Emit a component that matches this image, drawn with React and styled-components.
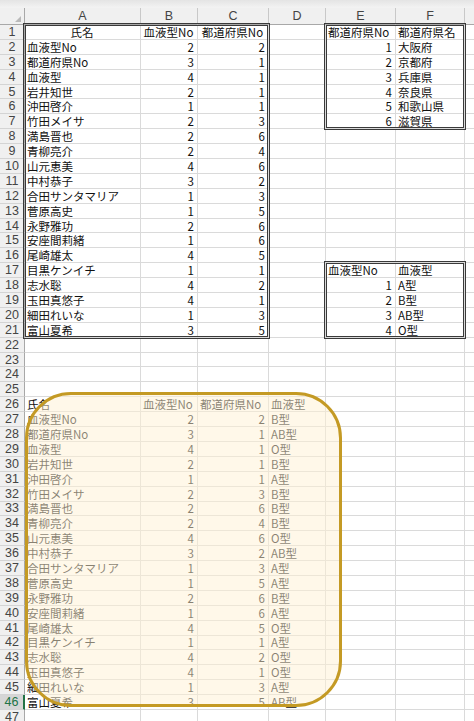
import React from 'react'
import styled, { createGlobalStyle, css } from 'styled-components'

const GlobalStyle = createGlobalStyle`
  html, body { margin: 0; padding: 0; background: #fff; }
  body { font-family: "Noto Sans CJK JP", "Noto Sans", sans-serif; overflow: hidden; }
`

const COLS = ['A', 'B', 'C', 'D', 'E', 'F', 'G']

const names = ['血液型No', '都道府県No', '血液型', '岩井知世', '沖田啓介', '竹田メイサ', '満島晋也', '青柳亮介', '山元恵美', '中村恭子', '合田サンタマリア', '菅原高史', '永野雅功', '安座間莉緒', '尾崎雄太', '目黒ケンイチ', '志水聡', '玉田真悠子', '細田れいな', '富山夏希']
const blood = [2, 3, 4, 2, 1, 2, 2, 2, 4, 3, 1, 1, 2, 1, 4, 1, 4, 4, 1, 3]
const pref = [2, 1, 1, 1, 1, 3, 6, 4, 6, 2, 3, 5, 6, 6, 5, 1, 2, 1, 3, 5]
const bloodTypes = ['A型', 'B型', 'AB型', 'O型']
const prefs = ['大阪府', '京都府', '兵庫県', '奈良県', '和歌山県', '滋賀県']

const Page = styled.div`
  position: relative;
  width: 474px;
  height: 721px;
  overflow: hidden;
  background: #fff;
`
const TopStrip = styled.div`
  height: 8px;
  background: linear-gradient(#e4e4e4, #f3f3f3);
`
const Sheet = styled.div`
  display: grid;
  grid-template-columns: 25px 116px 57px 71px 57px 70px 69px 64px;
  grid-template-rows: 17px;
  grid-auto-rows: 14.9px;
`
const ColHead = styled.div`
  box-sizing: border-box;
  background: #f0f0f0;
  border-right: 1px solid #c8c8c8;
  border-bottom: 1px solid #a8a8a8;
  color: #444;
  font-family: "Liberation Sans", Arial, sans-serif;
  font-size: 12.5px;
  display: flex;
  align-items: center;
  justify-content: center;
`
const Corner = styled(ColHead)`
  position: relative;
  border-right: 1px solid #a8a8a8;
  &::after {
    content: '';
    position: absolute;
    right: 3px;
    bottom: 2px;
    border-left: 6px solid transparent;
    border-bottom: 6px solid #b9b9b9;
  }
`
const RowHead = styled.div`
  box-sizing: border-box;
  background: #f0f0f0;
  border-right: 1px solid #a8a8a8;
  border-bottom: 1px solid #d4d4d4;
  color: #444;
  font-family: "Liberation Sans", Arial, sans-serif;
  font-size: 12.5px;
  display: flex;
  align-items: center;
  justify-content: center;
  ${p => p.$active && css`
    background: #d6d6d6;
    color: #217346;
    border-right: 2px solid #217346;
  `}
`
const Cell = styled.div`
  box-sizing: border-box;
  position: relative;
  border-right: 1px solid #dadada;
  border-bottom: 1px solid #dadada;
  padding: 0 3px 0 2px;
  font-size: 11.5px;
  line-height: 14px;
  color: #111;
  white-space: nowrap;
  display: flex;
  align-items: center;
  justify-content: ${p => p.$align === 'right' ? 'flex-end' : p.$align === 'center' ? 'center' : 'flex-start'};
  ${p => p.$edges && css`
    &::after {
      content: '';
      position: absolute;
      z-index: 1;
      pointer-events: none;
      top: ${p.$edges.t ? -2 : 0}px;
      bottom: ${p.$edges.b ? -2 : -1}px;
      left: ${p.$edges.l ? -2 : 0}px;
      right: ${p.$edges.r ? -2 : -1}px;
      ${p.$edges.t && 'border-top: 3px double #3a3a3a;'}
      ${p.$edges.b && 'border-bottom: 3px double #3a3a3a;'}
      ${p.$edges.l && 'border-left: 3px double #3a3a3a;'}
      ${p.$edges.r && 'border-right: 3px double #3a3a3a;'}
    }
  `}
`
const Highlight = styled.div`
  position: absolute;
  z-index: 2;
  left: 25px;
  top: 392px;
  width: 317px;
  height: 315px;
  box-sizing: border-box;
  border: 3px solid #c49a24;
  border-radius: 46px;
  background: rgba(255, 242, 212, 0.5);
  pointer-events: none;
`

const boxes = [
  { c1: 0, c2: 2, r1: 1, r2: 21 },
  { c1: 4, c2: 5, r1: 1, r2: 7 },
  { c1: 4, c2: 5, r1: 17, r2: 21 },
]

const edgesFor = (r, c) => {
  for (const b of boxes) {
    if (r >= b.r1 && r <= b.r2 && c >= b.c1 && c <= b.c2) {
      const e = { t: r === b.r1, b: r === b.r2, l: c === b.c1, r: c === b.c2 }
      if (e.t || e.b || e.l || e.r) return e
    }
  }
  return null
}

const cellAt = (r, c) => {
  // returns [text, align]
  if (r === 1) {
    return [['氏名', 'center'], ['血液型No', 'center'], ['都道府県No', 'center'], null, ['都道府県No', 'left'], ['都道府県名', 'left'], null][c]
  }
  if (r >= 2 && r <= 21) {
    const i = r - 2
    if (c === 0) return [names[i], 'left']
    if (c === 1) return [blood[i], 'right']
    if (c === 2) return [pref[i], 'right']
  }
  if (r >= 2 && r <= 7) {
    if (c === 4) return [r - 1, 'right']
    if (c === 5) return [prefs[r - 2], 'left']
  }
  if (r === 17) {
    if (c === 4) return ['血液型No', 'left']
    if (c === 5) return ['血液型', 'left']
  }
  if (r >= 18 && r <= 21) {
    if (c === 4) return [r - 17, 'right']
    if (c === 5) return [bloodTypes[r - 18], 'left']
  }
  if (r === 26) {
    return [['氏名', 'left'], ['血液型No', 'left'], ['都道府県No', 'left'], ['血液型', 'left']][c] || null
  }
  if (r >= 27 && r <= 46) {
    const i = r - 27
    if (c === 0) return [names[i], 'left']
    if (c === 1) return [blood[i], 'right']
    if (c === 2) return [pref[i], 'right']
    if (c === 3) return [bloodTypes[blood[i] - 1], 'left']
  }
  return null
}

const rows = Array.from({ length: 47 }, (_, i) => i + 1)

export default function App() {
  return (
    <>
      <GlobalStyle />
      <Page>
        <TopStrip />
        <Sheet>
          <Corner />
          {COLS.map(c => <ColHead key={c}>{c}</ColHead>)}
          {rows.map(r => (
            <React.Fragment key={r}>
              <RowHead $active={r === 46}>{r}</RowHead>
              {COLS.map((col, c) => {
                const v = cellAt(r, c)
                return (
                  <Cell key={col} $align={v ? v[1] : 'left'} $edges={edgesFor(r, c)}>
                    {v ? v[0] : ''}
                  </Cell>
                )
              })}
            </React.Fragment>
          ))}
        </Sheet>
        <Highlight />
      </Page>
    </>
  )
}
